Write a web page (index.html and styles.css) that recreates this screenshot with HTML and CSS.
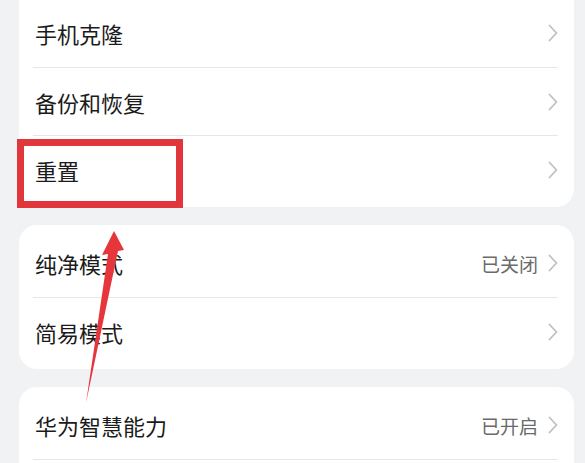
FILE: index.html
```html
<!DOCTYPE html>
<html lang="zh-CN">
  <head>
    <meta charset="UTF-8" />
    <meta name="viewport" content="width=device-width, initial-scale=1.0" />
    <title>设置</title>
    <link rel="stylesheet" href="styles.css">
  </head>
  <body>
    <div class="page">
      <div class="group group-first">
        <div class="row">
          <span class="label">手机克隆</span>
          <svg class="chevron" viewBox="0 0 10 18"><path d="M1.5 1.5 L8.5 9 L1.5 16.5" /></svg>
        </div>
        <div class="row">
          <span class="label">备份和恢复</span>
          <svg class="chevron" viewBox="0 0 10 18"><path d="M1.5 1.5 L8.5 9 L1.5 16.5" /></svg>
        </div>
        <div class="row">
          <span class="label">重置</span>
          <svg class="chevron" viewBox="0 0 10 18"><path d="M1.5 1.5 L8.5 9 L1.5 16.5" /></svg>
        </div>
      </div>

      <div class="group">
        <div class="row">
          <span class="label">纯净模式</span>
          <span class="value">已关闭</span>
          <svg class="chevron" viewBox="0 0 10 18"><path d="M1.5 1.5 L8.5 9 L1.5 16.5" /></svg>
        </div>
        <div class="row">
          <span class="label">简易模式</span>
          <svg class="chevron" viewBox="0 0 10 18"><path d="M1.5 1.5 L8.5 9 L1.5 16.5" /></svg>
        </div>
      </div>

      <div class="group">
        <div class="row">
          <span class="label">华为智慧能力</span>
          <span class="value">已开启</span>
          <svg class="chevron" viewBox="0 0 10 18"><path d="M1.5 1.5 L8.5 9 L1.5 16.5" /></svg>
        </div>
        <div class="row">
          <span class="label"></span>
        </div>
      </div>

      <div class="highlight"></div>
      <svg class="pointer" width="585" height="463" viewBox="0 0 585 463">
        <polygon points="114,231 124,250 118,251 86,403 108,254 102,255" fill="#e6353b" />
      </svg>
    </div>
  </body>
</html>
```

FILE: styles.css
```css
* {
  margin: 0;
  padding: 0;
  box-sizing: border-box;
}

body {
  width: 585px;
  height: 463px;
  overflow: hidden;
  background-color: #f1f2f4;
  font-family: 'Noto Sans CJK SC', 'Noto Sans', sans-serif;
}

.page {
  position: relative;
  height: 100%;
  overflow: hidden;
  padding: 0 11px 0 19px;
  display: flex;
  flex-direction: column;
  gap: 18px;
}

.group {
  flex-shrink: 0;
  background-color: #fff;
  border-radius: 18px;
  padding: 4px 0;
}

.group-first {
  margin-top: -5px;
  border-radius: 0 0 18px 18px;
}

.row {
  height: 68px;
  margin: 0 16px 0 14px;
  padding-left: 2px;
  display: flex;
  align-items: center;
}

.row + .row {
  border-top: 1px solid #e6e6e8;
}

.label {
  flex: 1;
  font-size: 22px;
  color: #1b1b1b;
}

.value {
  font-size: 19px;
  color: #6a6a6a;
  margin-right: 10px;
}

.chevron {
  width: 10px;
  height: 18px;
  fill: none;
  stroke: #bfbfbf;
  stroke-width: 1.8;
  stroke-linecap: round;
  stroke-linejoin: round;
}

.highlight {
  position: absolute;
  left: 17px;
  top: 139px;
  width: 166px;
  height: 69px;
  border: 7px solid #e2363d;
}

.pointer {
  position: absolute;
  left: 0;
  top: 0;
}
```
